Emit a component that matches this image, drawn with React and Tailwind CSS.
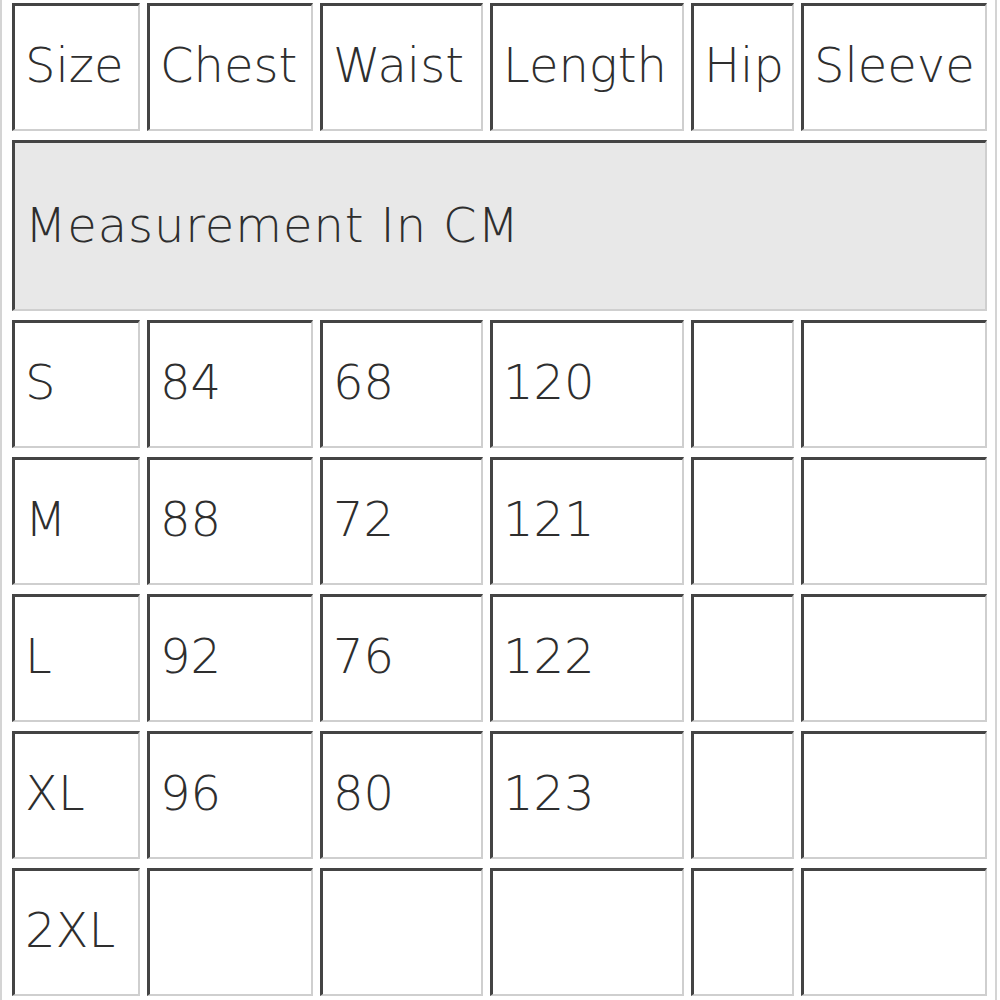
const headers = ["Size", "Chest", "Waist", "Length", "Hip", "Sleeve"];

const rows = [
  ["S", "84", "68", "120", "", ""],
  ["M", "88", "72", "121", "", ""],
  ["L", "92", "76", "122", "", ""],
  ["XL", "96", "80", "123", "", ""],
  ["2XL", "", "", "", "", ""],
];

function Cell({ children, className = "" }) {
  return (
    <div
      className={`h-[128px] flex items-center pl-[10px] pb-[6px] border-t-[3px] border-l-[3px] border-t-[#444] border-l-[#444] border-r-2 border-b-2 border-r-[#cfcfcf] border-b-[#cfcfcf] bg-white whitespace-nowrap ${className}`}
    >
      {children}
    </div>
  );
}

export default function App() {
  return (
    <div
      className="w-[1000px] h-[1000px] overflow-hidden bg-white text-[#2e2e2e] text-[48px] font-extralight"
      style={{ fontFamily: '"DejaVu Sans", Verdana, sans-serif' }}
    >
      <div className="w-[997px] h-[1000px] border-l-2 border-r-2 border-[#d4d4d4] pl-[10px] pt-[3px]">
        <div className="grid grid-cols-[128px_166px_163px_194px_103px_186px] gap-x-[7px] gap-y-[9px]">
          {headers.map((h) => (
            <Cell key={h}>{h}</Cell>
          ))}
          <div className="col-span-6 h-[171px] flex items-center pl-[10px] pb-[2px] tracking-[0.9px] border-t-[3px] border-l-[3px] border-t-[#444] border-l-[#444] border-r-2 border-b-2 border-r-[#cfcfcf] border-b-[#cfcfcf] bg-[#e8e8e8]">
            Measurement In CM
          </div>
          {rows.map((r, i) =>
            r.map((v, j) => <Cell key={`${i}-${j}`}>{v}</Cell>)
          )}
        </div>
      </div>
    </div>
  );
}
